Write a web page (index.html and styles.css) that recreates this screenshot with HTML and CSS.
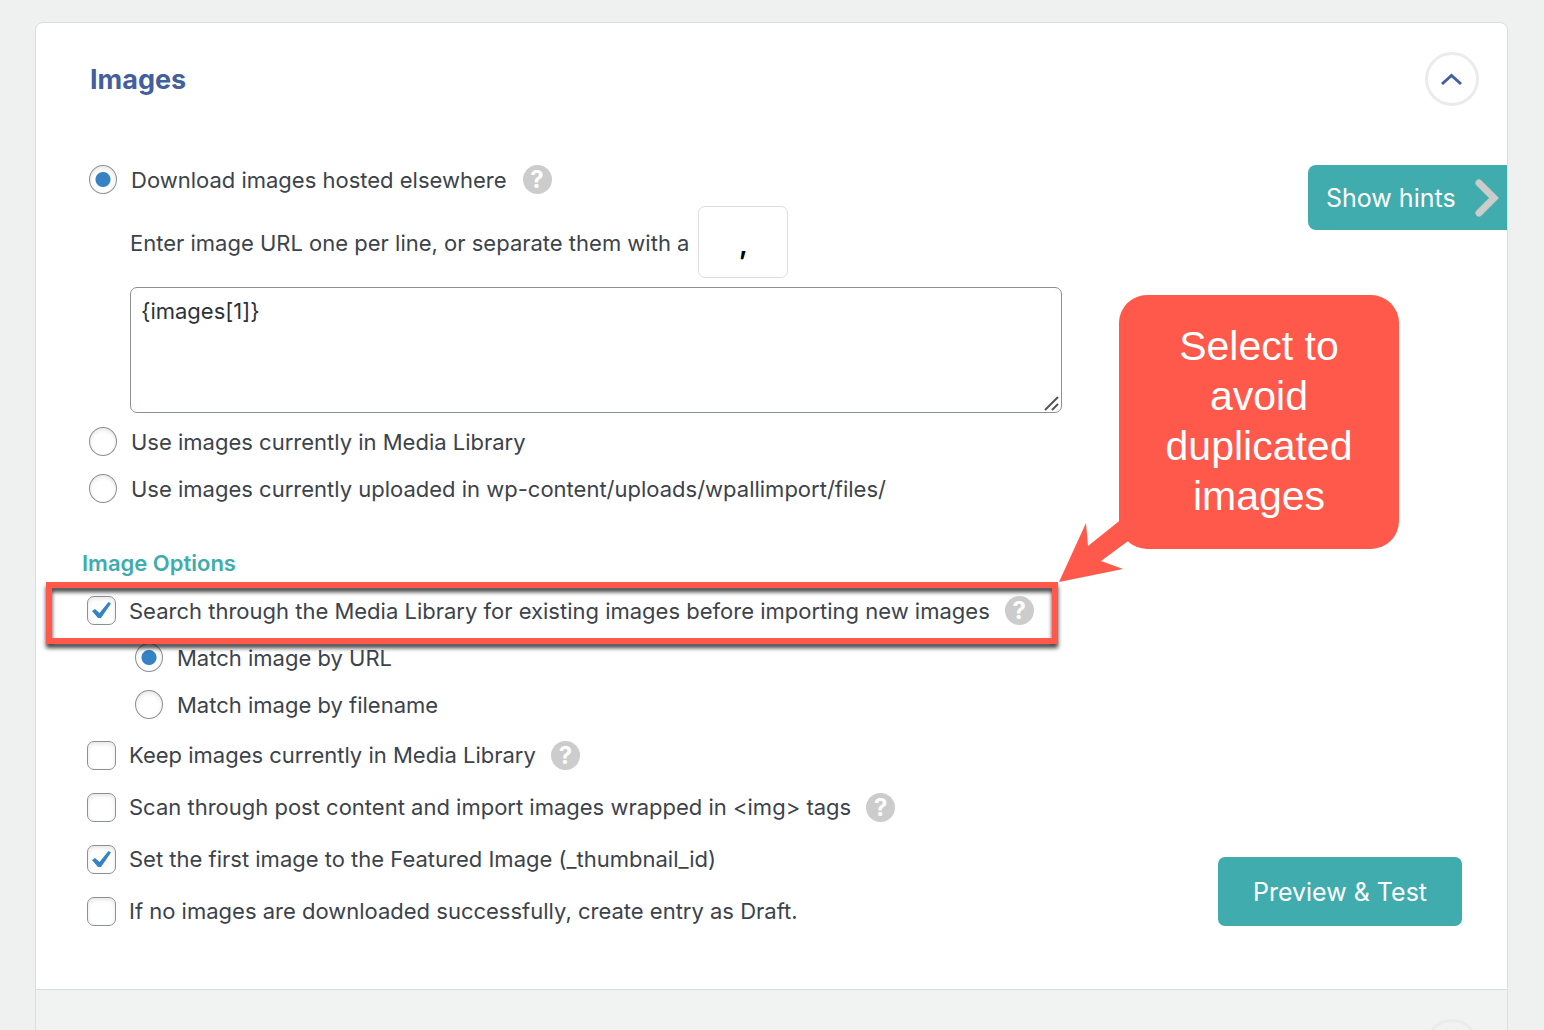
FILE: index.html
```html
<!DOCTYPE html>
<html lang="en">
<head>
    <meta charset="UTF-8">
    <meta name="viewport" content="width=device-width, initial-scale=1.0">
    <title>Images</title>
    <link rel="stylesheet" href="styles.css">
</head>
<body>
    <div class="page">
        <section class="panel">
            <div class="panel-header">
                <h2>Images</h2>
                <button type="button" class="toggle" aria-label="Collapse section">
                    <svg width="24" height="16" viewBox="0 0 24 16"><path d="M2 13L11.500 4.500L21 13" fill="none" stroke="#4560a0" stroke-width="3"/></svg>
                </button>
            </div>
            <div class="panel-body">
                <form class="options">
                    <div class="row source">
                        <input type="radio" name="source" id="download" checked>
                        <label for="download">Download images hosted elsewhere</label>
                        <button type="button" class="help" aria-label="Help">?</button>
                    </div>
                    <div class="separator">
                        <label for="delimiter">Enter image URL one per line, or separate them with a</label>
                        <input type="text" id="delimiter" value=",">
                    </div>
                    <textarea class="urls" aria-label="Image URLs">{images[1]}</textarea>
                    <div class="row source">
                        <input type="radio" name="source" id="library">
                        <label for="library">Use images currently in Media Library</label>
                    </div>
                    <div class="row source">
                        <input type="radio" name="source" id="uploads">
                        <label for="uploads">Use images currently uploaded in wp-content/uploads/wpallimport/files/</label>
                    </div>

                    <h3>Image Options</h3>
                    <div class="row check highlighted">
                        <input type="checkbox" id="search" checked>
                        <label for="search">Search through the Media Library for existing images before importing new images</label>
                        <button type="button" class="help" aria-label="Help">?</button>
                        <div class="highlight"></div>
                        <div class="callout">
                            <svg class="arrow" width="80" height="66" viewBox="0 0 80 66"><path d="M0 65L27 6L29 29L64 1L80 16L42 44L64 52Z" fill="#ff594b"/></svg>
                            <p>Select to avoid duplicated images</p>
                        </div>
                    </div>
                    <div class="matches">
                        <div class="row match">
                            <input type="radio" name="match" id="by-url" checked>
                            <label for="by-url">Match image by URL</label>
                        </div>
                        <div class="row match">
                            <input type="radio" name="match" id="by-filename">
                            <label for="by-filename">Match image by filename</label>
                        </div>
                    </div>
                    <div class="row check tall">
                        <input type="checkbox" id="keep">
                        <label for="keep">Keep images currently in Media Library</label>
                        <button type="button" class="help" aria-label="Help">?</button>
                    </div>
                    <div class="row check tall">
                        <input type="checkbox" id="scan">
                        <label for="scan">Scan through post content and import images wrapped in &lt;img&gt; tags</label>
                        <button type="button" class="help" aria-label="Help">?</button>
                    </div>
                    <div class="row check tall">
                        <input type="checkbox" id="featured" checked>
                        <label for="featured">Set the first image to the Featured Image (_thumbnail_id)</label>
                    </div>
                    <div class="row check tall">
                        <input type="checkbox" id="draft">
                        <label for="draft">If no images are downloaded successfully, create entry as Draft.</label>
                    </div>
                </form>
                <div class="actions">
                    <button type="button" class="hints">
                        Show hints
                        <svg width="24" height="38" viewBox="0 0 24 38"><path d="M4 4L19 19L4 34" fill="none" stroke="#ccc" stroke-width="7" stroke-linecap="round"/></svg>
                    </button>
                    <button type="button" class="preview">Preview &amp; Test</button>
                </div>
            </div>
        </section>
        <section class="panel next">
            <div class="panel-header">
                <button type="button" class="toggle" aria-label="Expand section"></button>
            </div>
        </section>
    </div>
</body>
</html>
```
FILE: styles.css
```css
* {
    box-sizing: border-box;
}
body {
    margin: 0;
    background-color: #eff1f1;
    color: #3c434a;
    font-family: Inter, "Open Sans", sans-serif;
    font-size: 22px;
    line-height: 28px;
}
button, input, textarea {
    margin: 0;
    font-family: inherit;
}
button {
    border: none;
    cursor: pointer;
}
.page {
    height: 100vh;
    padding: 22px 36px 0 35px;
    overflow: hidden;
}
.panel {
    background: #fff;
    border: 1px solid #dcdddd;
    border-radius: 8px 8px 0 0;
}
.next {
    background: #f1f3f2;
    border-top: none;
    border-radius: 0;
}
.panel-header {
    display: flex;
    align-items: center;
    justify-content: space-between;
    padding: 29px 28px 0 54px;
}
.next .panel-header {
    justify-content: flex-end;
    padding-bottom: 29px;
}
h2 {
    margin: 0;
    padding-top: 2px;
    color: #435f9c;
    font-size: 27px;
    font-weight: 700;
    line-height: 36px;
}
.toggle {
    display: flex;
    align-items: center;
    justify-content: center;
    width: 54px;
    height: 54px;
    padding: 0;
    background: transparent;
    border: 3px solid #ebebeb;
    border-radius: 50%;
}
.panel-body {
    display: flex;
    justify-content: space-between;
}
.options {
    flex: 1;
    min-width: 0;
    max-width: 1026px;
    padding: 50px 0 52px;
}
.row {
    display: flex;
    align-items: center;
    min-height: 47px;
}
.source {
    padding-left: 53px;
    gap: 14px;
}
.check {
    padding-left: 51px;
    gap: 13px;
}
.matches {
    margin-bottom: 1px;
}
.match {
    padding-left: 99px;
    gap: 14px;
}
.tall {
    min-height: 52px;
}
input[type="radio"], input[type="checkbox"] {
    appearance: none;
    flex: none;
    width: 29px;
    height: 29px;
    background: #fff center no-repeat;
    border: 1px solid #8c8f94;
    box-shadow: inset 0 2px 4px rgba(0, 0, 0, 0.1);
}
input[type="radio"] {
    width: 28px;
    border-radius: 50%;
}
input[type="radio"]:checked {
    background-image: radial-gradient(circle, #3582c4 7px, transparent 8px);
}
input[type="checkbox"] {
    border-radius: 7px;
}
input[type="checkbox"]:checked {
    background-image: url("data:image/svg+xml,%3Csvg xmlns='http://www.w3.org/2000/svg' width='27' height='27'%3E%3Cpath d='M4 14L7 12L11.500 16L20.500 5L23 6.500L13 21H10Z' fill='%233582c4'/%3E%3C/svg%3E");
}
.help {
    flex: none;
    width: 29px;
    height: 29px;
    margin-left: 2px;
    padding: 0;
    background: #ccc;
    border-radius: 50%;
    color: #fff;
    font-size: 24px;
    font-weight: 700;
    line-height: 29px;
}
.separator {
    display: flex;
    align-items: center;
    gap: 9px;
    margin-top: 3px;
    padding-left: 94px;
}
.separator label {
    padding-top: 2px;
}
.separator input {
    width: 90px;
    height: 72px;
    padding: 4px 0 0;
    background: #fff;
    border: 1px solid #ddd;
    border-radius: 7px;
    color: #000;
    font-size: 28px;
    font-weight: 600;
    text-align: center;
}
.urls {
    display: block;
    width: calc(100% - 94px);
    height: 126px;
    margin: 9px 0 5px 94px;
    padding: 9px 10px;
    background: #fff url("data:image/svg+xml,%3Csvg xmlns='http://www.w3.org/2000/svg' width='16' height='16'%3E%3Cpath d='M1 14L14 1M8 14L14 8' stroke='%23555' stroke-width='2'/%3E%3C/svg%3E") right 1px bottom 0 no-repeat;
    border: 1px solid #8c8f94;
    border-radius: 7px;
    color: #2c3338;
    font-size: 22px;
    line-height: 28px;
    resize: none;
}
h3 {
    margin: 37px 0 10px 46px;
    color: #40acad;
    font-size: 22px;
    font-weight: 600;
    line-height: 28px;
}
.highlighted {
    position: relative;
}
/* annotation drawn over the form */
.highlight {
    position: absolute;
    inset: -5px 4px -10px 10px;
    border: 6px solid #ff594b;
    filter: drop-shadow(0 4px 2px rgba(0, 0, 0, 0.75));
    pointer-events: none;
}
.callout {
    position: absolute;
    bottom: 85px;
    left: calc(100% + 57px);
    width: 280px;
    padding: 26px 40px 28px;
    background: #ff594b;
    border-radius: 28px;
    color: #fff;
    font-family: "Liberation Sans", Arial, sans-serif;
    font-size: 41px;
    line-height: 50px;
    text-align: center;
}
.callout p {
    margin: 0;
}
.arrow {
    position: absolute;
    right: 260px;
    bottom: -34px;
}
.actions {
    display: flex;
    flex-direction: column;
    align-items: flex-end;
    justify-content: space-between;
    padding: 59px 0 63px;
}
.hints, .preview {
    background: #40acad;
    color: #fff;
    font-size: 25px;
}
.hints {
    display: flex;
    align-items: center;
    justify-content: space-between;
    width: 199px;
    height: 65px;
    padding: 0 8px 0 18px;
    border-radius: 8px 0 0 8px;
}
.preview {
    width: 244px;
    height: 69px;
    margin-right: 45px;
    border-radius: 7px;
}
```
